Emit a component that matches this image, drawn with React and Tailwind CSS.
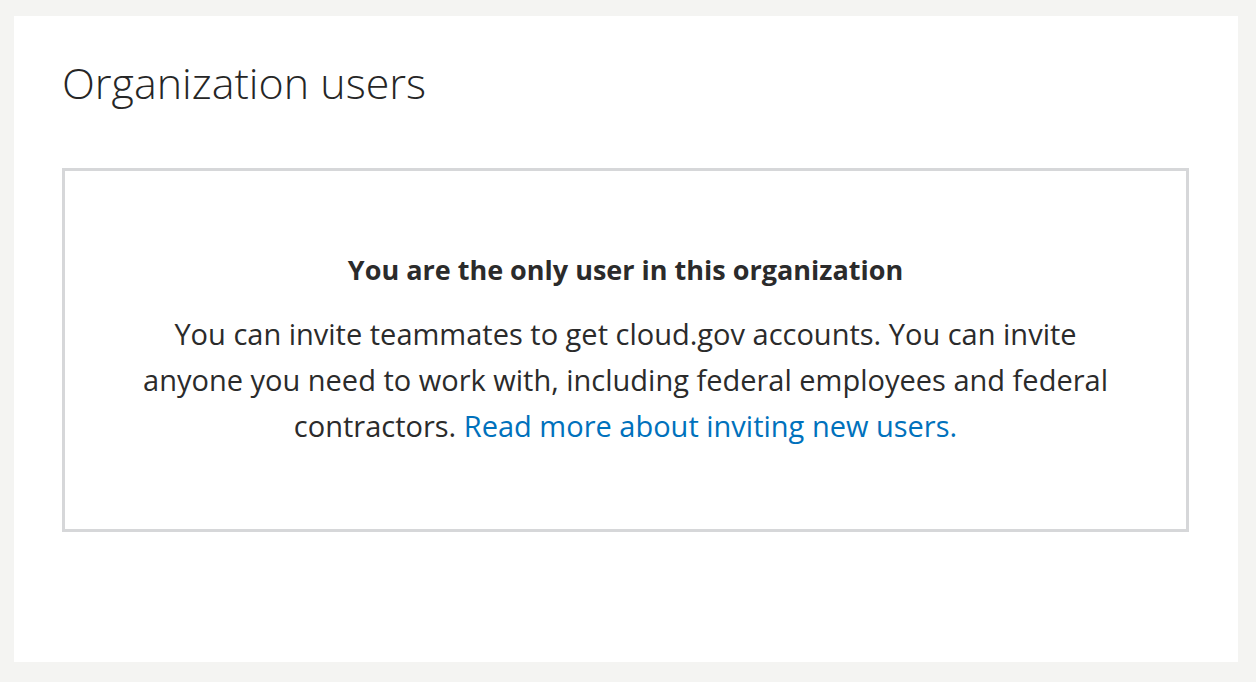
import React from 'react';

// Page des utilisateurs d'une organisation — état vide
export default function App() {
  return (
    <div
      className="min-h-[682px] bg-[#f4f4f2] pl-[14px] pr-[18px] pt-[16px] pb-[20px]"
      style={{ fontFamily: '"Open Sans", "Noto Sans", sans-serif' }}
    >
      <div className="bg-white pl-[48px] pr-[49px] pt-[43px] pb-[130px]">
        <h1 className="text-[43px] leading-[48px] font-light text-[#262626]">Organization users</h1>

        <div className="mt-[61px] border-[3px] border-[#d6d7d9] px-[20px] pt-[82px] pb-[80px] text-center text-[#2b2b2b]">
          <h2 className="text-[27px] leading-[34px] font-bold">You are the only user in this organization</h2>
          <p className="mx-auto mt-[24px] max-w-[975px] text-[29px] leading-[46px]">
            You can invite teammates to get cloud.gov accounts. You can invite anyone you need to work with, including
            federal employees and federal contractors.{' '}
            <a href="#" className="text-[#0071bc]">Read more about inviting new users.</a>
          </p>
        </div>
      </div>
    </div>
  );
}
